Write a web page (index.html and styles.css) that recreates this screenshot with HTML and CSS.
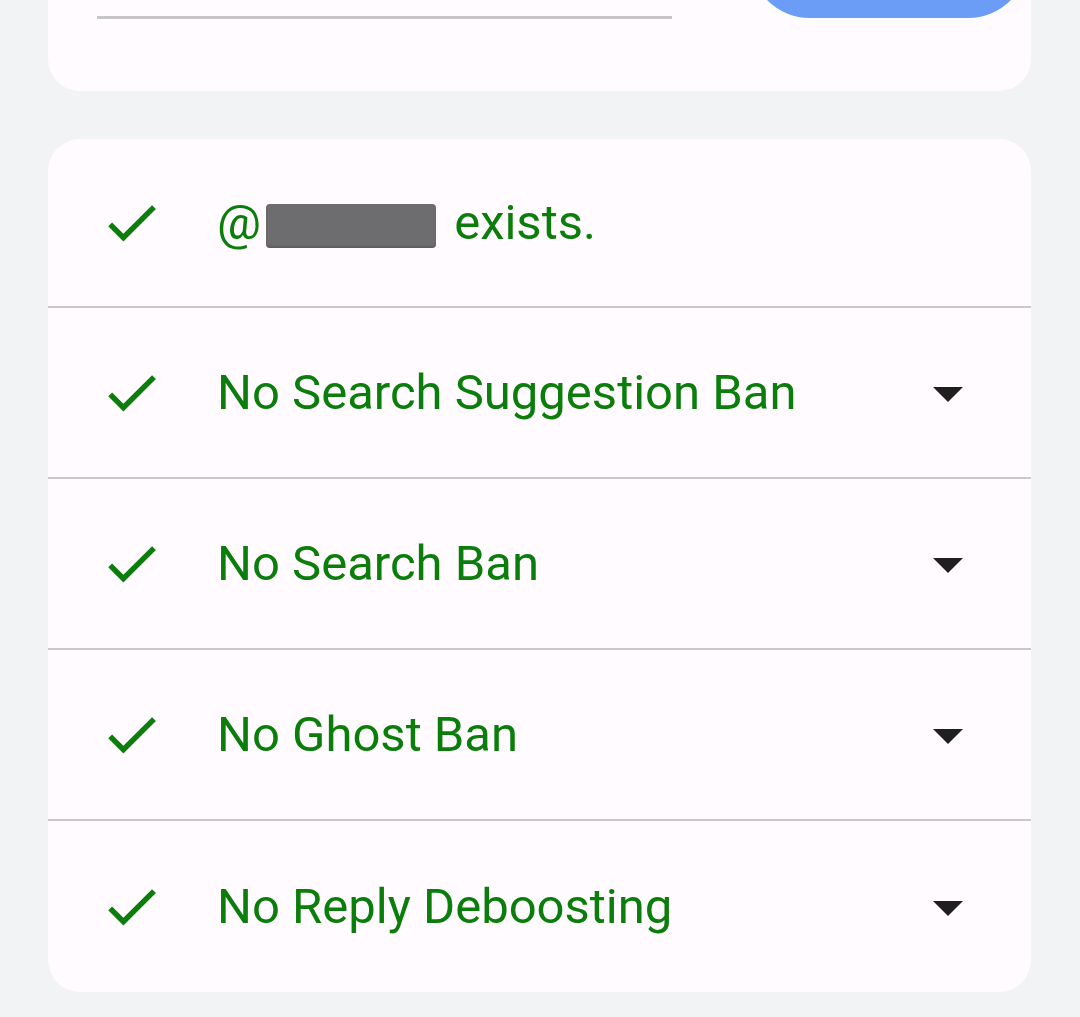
FILE: index.html
```html
<!doctype html>
<html lang="en">
<head>
    <meta charset="utf-8">
    <title>Shadowban check</title>
    <link rel="stylesheet" href="styles.css">
</head>
<body>
    <main class="page">
        <section class="card search-card">
            <input class="handle-input" type="text" aria-label="Username">
            <button class="check-btn" type="button" aria-label="Check"></button>
        </section>

        <section class="card results">
            <div class="row">
                <svg class="icon-ok" viewBox="0 0 24 24"><path d="M9 16.17L4.83 12l-1.42 1.41L9 19 21 7l-1.41-1.41z"/></svg>
                <div class="label">@<span class="redacted"></span> exists.</div>
            </div>
            <div class="row">
                <svg class="icon-ok" viewBox="0 0 24 24"><path d="M9 16.17L4.83 12l-1.42 1.41L9 19 21 7l-1.41-1.41z"/></svg>
                <div class="label">No Search Suggestion Ban</div>
                <svg class="icon-more" viewBox="0 0 24 24"><path d="M7 10l5 5 5-5z"/></svg>
            </div>
            <div class="row">
                <svg class="icon-ok" viewBox="0 0 24 24"><path d="M9 16.17L4.83 12l-1.42 1.41L9 19 21 7l-1.41-1.41z"/></svg>
                <div class="label">No Search Ban</div>
                <svg class="icon-more" viewBox="0 0 24 24"><path d="M7 10l5 5 5-5z"/></svg>
            </div>
            <div class="row">
                <svg class="icon-ok" viewBox="0 0 24 24"><path d="M9 16.17L4.83 12l-1.42 1.41L9 19 21 7l-1.41-1.41z"/></svg>
                <div class="label">No Ghost Ban</div>
                <svg class="icon-more" viewBox="0 0 24 24"><path d="M7 10l5 5 5-5z"/></svg>
            </div>
            <div class="row">
                <svg class="icon-ok" viewBox="0 0 24 24"><path d="M9 16.17L4.83 12l-1.42 1.41L9 19 21 7l-1.41-1.41z"/></svg>
                <div class="label">No Reply Deboosting</div>
                <svg class="icon-more" viewBox="0 0 24 24"><path d="M7 10l5 5 5-5z"/></svg>
            </div>
        </section>
    </main>
</body>
</html>
```

FILE: styles.css
```css
* {
    box-sizing: border-box;
}
body {
    margin: 0;
    background-color: #f1f3f4;
    font-family: Roboto, "Noto Sans", sans-serif;
}
.page {
    padding: 0 49px 0 48px;
}
.card {
    background-color: #fffbfe;
    border-radius: 32px;
    overflow: hidden;
}

/* search box, scrolled mostly out of view */
.search-card {
    margin-top: -110px;
    height: 201px;
    padding: 8px 3px 0 49px;
    display: flex;
    align-items: flex-start;
    justify-content: space-between;
    margin-bottom: 48px;
}
.handle-input {
    width: 575px;
    height: 121px;
    border: none;
    border-bottom: 3px solid #c6c6c6;
    background: transparent;
    font-size: 40px;
    outline: none;
}
.check-btn {
    width: 278px;
    height: 120px;
    border: none;
    border-radius: 62px;
    background-color: #6b9cf6;
}

/* results list */
.row {
    height: 171px;
    display: flex;
    align-items: center;
    padding: 0 47px 0 51px;
    border-bottom: 2px solid #c8c8c8;
}
.row:first-child {
    height: 169px;
}
.row:last-child {
    border-bottom: none;
}
.icon-ok {
    width: 65px;
    height: 65px;
    fill: #0b7d0b;
    flex: none;
}
.label {
    flex: 1;
    margin-left: 53px;
    font-size: 49px;
    color: #0b7d0b;
    white-space: nowrap;
}
.redacted {
    display: inline-block;
    width: 170px;
    height: 44px;
    margin: 0 6px 0 5px;
    vertical-align: -9px;
    background-color: #6d6d6f;
    border-radius: 4px;
    box-shadow: inset 0 -2px 2px rgba(0, 0, 0, 0.15);
}
.icon-more {
    width: 72px;
    height: 72px;
    fill: #1f1f1f;
    flex: none;
}
```
